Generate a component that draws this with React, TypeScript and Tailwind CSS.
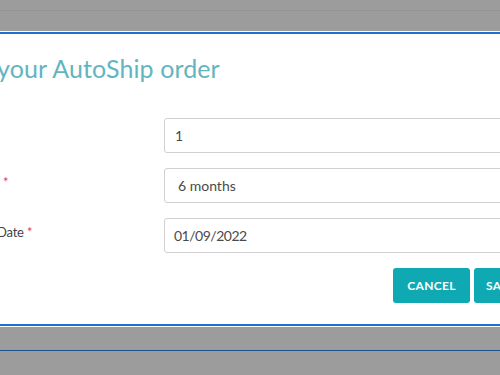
export default function App() {
  const font = { fontFamily: "Lato, 'Open Sans', sans-serif" };
  return (
    <div className="w-[500px] h-[375px] overflow-hidden bg-[#9b9c9b] flex flex-col" style={font}>
      <div className="h-[10px] shrink-0" />
      <div className="h-px bg-[#939493] shrink-0" />
      <div className="h-[20px] shrink-0" />
      <div className="h-px bg-white shrink-0" />
      <div className="h-[2px] bg-[#1f6fd0] shrink-0" />
      <div className="h-[290px] bg-white shrink-0 pt-[16px]">
        <h2 className="text-[25px] leading-[36px] h-[38px] text-[#62b5c0] ml-[-3px] whitespace-nowrap tracking-[0.1px]">
          your AutoShip order
        </h2>
        <div className="mt-[30px] flex flex-col gap-[15px]">
          <div className="flex">
            <div className="w-[164px] shrink-0" />
            <div className="w-[400px] shrink-0 h-[35px] border border-[#d0d0d0] rounded-[3px] pl-[10px] flex items-center text-[14px] text-[#4a4a4a]">
              1
            </div>
          </div>
          <div className="flex">
            <div className="w-[164px] shrink-0 pt-[5px] pl-[3px] text-[13px] text-[#444]">
              <span className="text-[#e2405a]">*</span>
            </div>
            <div className="w-[400px] shrink-0 h-[35px] border border-[#d0d0d0] rounded-[3px] pl-[13px] flex items-center text-[14px] text-[#4a4a4a]">
              6 months
            </div>
          </div>
          <div className="flex">
            <div className="w-[164px] shrink-0 pt-[5px] text-[13px] text-[#444] whitespace-nowrap ml-[-3px] tracking-[-0.2px]">
              Date <span className="text-[#e2405a]">*</span>
            </div>
            <div className="w-[400px] shrink-0 h-[35px] border border-[#d0d0d0] rounded-[3px] pl-[9px] flex items-center text-[14px] text-[#4a4a4a] tracking-[-0.5px] ml-[3px]">
              01/09/2022
            </div>
          </div>
          <div className="flex pl-[393px] gap-[4px]">
            <button className="w-[77px] h-[35px] shrink-0 rounded-[3px] bg-[#0fa9b4] text-white text-[12px] font-bold tracking-[0.3px]">
              CANCEL
            </button>
            <button className="w-[77px] h-[35px] shrink-0 rounded-[3px] bg-[#0fa9b4] text-white text-[12px] font-bold tracking-[0.3px] text-left pl-[12px]">
              SAVE
            </button>
          </div>
        </div>
      </div>
      <div className="h-[2px] bg-[#1f6fd0] shrink-0" />
      <div className="h-px bg-white shrink-0" />
      <div className="h-[23px] shrink-0" />
      <div className="h-px bg-[#1c5290] shrink-0" />
      <div className="flex-1" />
    </div>
  );
}
